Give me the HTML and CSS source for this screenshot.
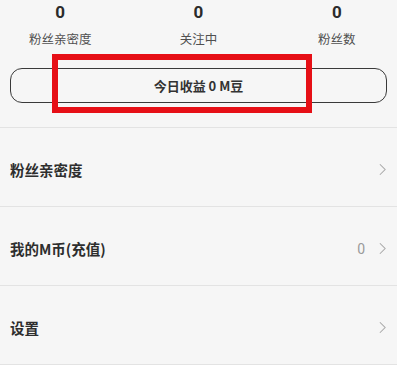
FILE: index.html
```html
<!DOCTYPE html>
<html lang="zh-CN">
<head>
    <meta charset="UTF-8">
    <meta name="viewport" content="width=device-width, initial-scale=1.0">
    <title>我的</title>
    <link rel="stylesheet" href="styles.css">
</head>
<body>
    <div class="header">
        <div class="stats">
            <div class="stat">
                <div class="num">0</div>
                <div class="label">粉丝亲密度</div>
            </div>
            <div class="stat">
                <div class="num">0</div>
                <div class="label">关注中</div>
            </div>
            <div class="stat">
                <div class="num">0</div>
                <div class="label">粉丝数</div>
            </div>
        </div>
        <div class="income">今日收益 0 M豆</div>
        <div class="highlight"></div>
    </div>

    <div class="menu">
        <div class="row">
            <span class="title">粉丝亲密度</span>
            <span class="right">
                <svg class="arrow" viewBox="0 0 8 14"><polyline points="1,1 7,7 1,13"/></svg>
            </span>
        </div>
        <div class="row">
            <span class="title">我的M币(充值)</span>
            <span class="right">
                <span class="value">0</span>
                <svg class="arrow" viewBox="0 0 8 14"><polyline points="1,1 7,7 1,13"/></svg>
            </span>
        </div>
        <div class="row">
            <span class="title">设置</span>
            <span class="right">
                <svg class="arrow" viewBox="0 0 8 14"><polyline points="1,1 7,7 1,13"/></svg>
            </span>
        </div>
    </div>
</body>
</html>
```

FILE: styles.css
```css
body {
    margin: 0;
    background: #f6f6f6;
    font-family: 'Noto Sans CJK SC', 'Noto Sans', sans-serif;
    color: #333;
    overflow: hidden;
}

.header {
    position: relative;
    height: 127px;
    border-bottom: 1px solid #e3e3e3;
}

.stats {
    display: flex;
    margin: 0 -9px;
    padding-top: 2px;
}

.stat {
    flex: 1;
    text-align: center;
}

.num {
    font-family: 'Roboto', sans-serif;
    font-size: 17px;
    font-weight: bold;
    line-height: 20px;
    color: #2b2b2b;
}

.label {
    margin-top: 9px;
    font-size: 12.5px;
    line-height: 16px;
    color: #505050;
}

.income {
    margin: 21px 10px 0 10px;
    height: 33px;
    border: 1px solid #3a3a3a;
    border-radius: 12px;
    display: flex;
    align-items: center;
    justify-content: center;
    font-size: 13px;
    font-weight: bold;
    color: #333;
}

.highlight {
    position: absolute;
    left: 52px;
    top: 54px;
    width: 260px;
    height: 59px;
    box-sizing: border-box;
    border: 6px solid #e60f16;
}

.row {
    height: 79px;
    box-sizing: border-box;
    padding: 5px 11px 0 10px;
    border-bottom: 1px solid #e3e3e3;
    display: flex;
    align-items: center;
    justify-content: space-between;
}

.title {
    font-size: 14.5px;
    font-weight: bold;
    color: #2e2e2e;
}

.right {
    display: flex;
    align-items: center;
    gap: 14px;
}

.value {
    font-family: 'Roboto', sans-serif;
    font-size: 14px;
    color: #9a9a9a;
}

.arrow {
    width: 7px;
    height: 13px;
    fill: none;
    stroke: #a8a8a8;
    stroke-width: 1.2;
}
```
